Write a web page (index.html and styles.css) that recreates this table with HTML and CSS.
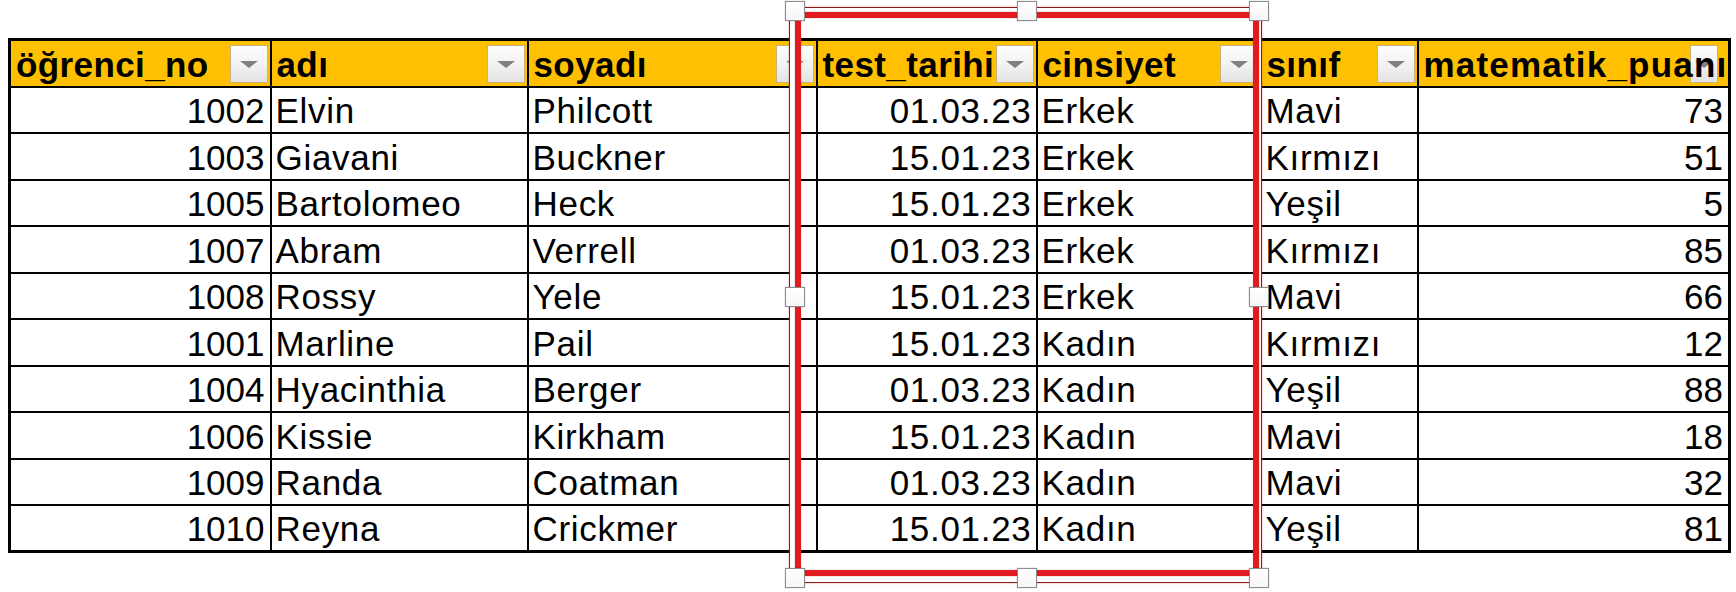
FILE: index.html
```html
<!DOCTYPE html>
<html lang="tr">
<head>
<meta charset="utf-8">
<title>Öğrenci tablosu</title>
<link rel="stylesheet" href="styles.css">
</head>
<body>
<div class="sheet">
  <table class="grid">
    <colgroup>
      <col class="c1"><col class="c2"><col class="c3"><col class="c4"><col class="c5"><col class="c6"><col class="c7">
    </colgroup>
    <thead>
      <tr>
        <th><span class="lbl">öğrenci_no</span><span class="dd"></span></th>
        <th><span class="lbl">adı</span><span class="dd"></span></th>
        <th><span class="lbl">soyadı</span><span class="dd"></span></th>
        <th><span class="lbl">test_tarihi</span><span class="dd"></span></th>
        <th><span class="lbl">cinsiyet</span><span class="dd"></span></th>
        <th><span class="lbl">sınıf</span><span class="dd"></span></th>
        <th><span class="lbl lbl-wide">matematik_puanı</span><span class="dd dd-narrow"></span></th>
      </tr>
    </thead>
    <tbody>
      <tr><td class="num">1002</td><td>Elvin</td><td>Philcott</td><td class="num date">01.03.23</td><td>Erkek</td><td>Mavi</td><td class="num">73</td></tr>
      <tr><td class="num">1003</td><td>Giavani</td><td>Buckner</td><td class="num date">15.01.23</td><td>Erkek</td><td>Kırmızı</td><td class="num">51</td></tr>
      <tr><td class="num">1005</td><td>Bartolomeo</td><td>Heck</td><td class="num date">15.01.23</td><td>Erkek</td><td>Yeşil</td><td class="num">5</td></tr>
      <tr><td class="num">1007</td><td>Abram</td><td>Verrell</td><td class="num date">01.03.23</td><td>Erkek</td><td>Kırmızı</td><td class="num">85</td></tr>
      <tr><td class="num">1008</td><td>Rossy</td><td>Yele</td><td class="num date">15.01.23</td><td>Erkek</td><td>Mavi</td><td class="num">66</td></tr>
      <tr><td class="num">1001</td><td>Marline</td><td>Pail</td><td class="num date">15.01.23</td><td>Kadın</td><td>Kırmızı</td><td class="num">12</td></tr>
      <tr><td class="num">1004</td><td>Hyacinthia</td><td>Berger</td><td class="num date">01.03.23</td><td>Kadın</td><td>Yeşil</td><td class="num">88</td></tr>
      <tr><td class="num">1006</td><td>Kissie</td><td>Kirkham</td><td class="num date">15.01.23</td><td>Kadın</td><td>Mavi</td><td class="num">18</td></tr>
      <tr><td class="num">1009</td><td>Randa</td><td>Coatman</td><td class="num date">01.03.23</td><td>Kadın</td><td>Mavi</td><td class="num">32</td></tr>
      <tr><td class="num">1010</td><td>Reyna</td><td>Crickmer</td><td class="num date">15.01.23</td><td>Kadın</td><td>Yeşil</td><td class="num">81</td></tr>
    </tbody>
  </table>

  <div class="sel">
    <div class="sel-gap"><div class="sel-line"></div></div>
    <span class="hd h-tl"></span>
    <span class="hd h-tm"></span>
    <span class="hd h-tr"></span>
    <span class="hd h-ml"></span>
    <span class="hd h-mr"></span>
    <span class="hd h-bl"></span>
    <span class="hd h-bm"></span>
    <span class="hd h-br"></span>
  </div>
</div>
</body>
</html>
```

FILE: styles.css
```css
html, body {
  margin: 0;
  padding: 0;
  background: #ffffff;
}

.sheet {
  position: relative;
  width: 1736px;
  height: 592px;
  overflow: hidden;
  padding: 38px 0 0 8px;
  box-sizing: border-box;
}

.grid {
  border-collapse: collapse;
  table-layout: fixed;
  width: 1722px;
  border: 3px solid #000;
  font-family: "Liberation Sans", Arial, Helvetica, sans-serif;
  font-size: 35px;
  color: #000;
  background: #fff;
}

.c1 { width: 261px; }
.c2 { width: 257px; }
.c3 { width: 289px; }
.c4 { width: 220px; }
.c5 { width: 224px; }
.c6 { width: 157px; }
.c7 { width: 312px; }

.grid th,
.grid td {
  border: 2px solid #000;
  padding: 0 5px 1px 5px;
  line-height: 40px;
  vertical-align: bottom;
  white-space: nowrap;
  overflow: visible;
  text-align: left;
}

.grid thead tr {
  height: 47px;
}

.grid tbody tr {
  height: 46.5px;
}

.grid th {
  background: #fec000;
  font-weight: bold;
  position: relative;
  padding-left: 5px;
  letter-spacing: 0.4px;
}

.grid td {
  padding-left: 4px;
  letter-spacing: 0.7px;
}

.grid td.num {
  text-align: right;
  letter-spacing: 0;
}

.grid td.date {
  letter-spacing: 0.7px;
  padding-right: 4px;
}

.lbl {
  position: relative;
  z-index: 2;
}

.lbl-wide {
  letter-spacing: 1.2px;
}

.dd {
  position: absolute;
  z-index: 1;
  top: 4px;
  right: 2px;
  width: 38px;
  height: 38px;
  box-sizing: border-box;
  border: 1px solid #c8b27a;
  background: linear-gradient(#fefefe, #f1f1f1 55%, #e2e2e2);
  display: flex;
  align-items: center;
  justify-content: center;
}

.dd::after {
  content: "";
  width: 0;
  height: 0;
  border-left: 9px solid transparent;
  border-right: 9px solid transparent;
  border-top: 7px solid #808080;
}

.dd-narrow {
  width: 28px;
  right: 10px;
}

/* selection rectangle */
.sel {
  position: absolute;
  left: 789px;
  top: 7px;
  width: 473px;
  height: 576px;
  box-sizing: border-box;
  border: 1px solid #8c1b1b;
  box-shadow: 0 0 2px rgba(230, 40, 40, 0.45);
  z-index: 5;
}

.sel-gap {
  height: 100%;
  box-sizing: border-box;
  border-style: solid;
  border-color: #ffffff;
  border-width: 4px 2px 6px 5px;
}

.sel-line {
  height: 100%;
  box-sizing: border-box;
  border: 6px solid #e11b1f;
  box-shadow: 0 0 1px rgba(170, 0, 0, 0.6), inset 0 0 1px rgba(170, 0, 0, 0.6);
}

.hd {
  position: absolute;
  width: 20px;
  height: 20px;
  box-sizing: border-box;
  background: linear-gradient(#ffffff, #f6f6f6);
  border: 1px solid #8d8d8d;
  box-shadow: 0 0 1px rgba(0, 0, 0, 0.35);
}

.h-tl { left: -5px;  top: -7px; }
.h-tm { left: 227px; top: -7px; }
.h-tr { left: 459px; top: -7px; }
.h-ml { left: -5px;  top: 279px; }
.h-mr { left: 459px; top: 279px; }
.h-bl { left: -5px;  top: 560px; }
.h-bm { left: 227px; top: 560px; }
.h-br { left: 459px; top: 560px; }
```
